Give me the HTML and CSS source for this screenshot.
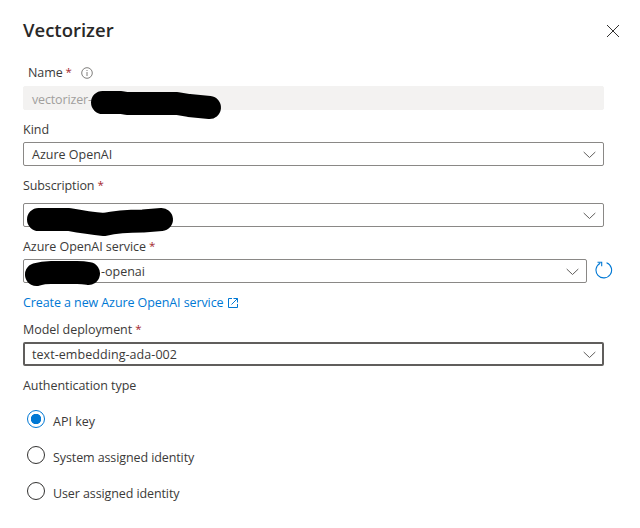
FILE: index.html
```html
<!DOCTYPE html>
<html lang="en">
<head>
<meta charset="utf-8">
<title>Vectorizer</title>
<link rel="stylesheet" href="styles.css">
</head>
<body>
<main class="panel">
  <header class="header">
    <h1 class="title">Vectorizer</h1>
    <svg class="close" width="14" height="14" viewBox="0 0 14 14"><path d="M1 1L13 13M13 1L1 13"/></svg>
  </header>

  <div class="label label-name"><span>Name</span><span class="req">*</span>
    <svg class="info" width="12" height="12" viewBox="0 0 12 12"><circle cx="6" cy="6" r="5.3"/><path d="M6 5v4M6 3v1"/></svg>
  </div>
  <div class="field disabled"><span class="t-vec">vectorizer-</span>
    <svg class="redact" width="560" height="48" viewBox="0 0 560 48"><path stroke-width="23" d="M79.500 15.500L98 15.500L104 16.500L154 16.500L166 18.500L186.500 20.500"/></svg>
  </div>

  <div class="label label-kind"><span>Kind</span></div>
  <div class="field select"><span>Azure OpenAI</span>
    <svg class="chevron" width="13" height="8" viewBox="0 0 13 8"><path d="M.7 1L6.5 6.5L12.3 1"/></svg>
  </div>

  <div class="label label-sub"><span class="t-sub">Subscription</span><span class="req">*</span></div>
  <div class="field select">
    <svg class="chevron" width="13" height="8" viewBox="0 0 13 8"><path d="M.7 1L6.5 6.5L12.3 1"/></svg>
    <svg class="redact" width="560" height="48" viewBox="0 0 560 48"><path stroke-width="23" d="M15.500 15.500L46 15.500Q65 19 81 20.500Q96 17 120 17L138.500 15.500"/></svg>
  </div>

  <div class="label label-service"><span class="t-service">Azure OpenAI service</span><span class="req">*</span></div>
  <div class="row">
    <div class="field select service"><span>-openai</span>
      <svg class="chevron" width="13" height="8" viewBox="0 0 13 8"><path d="M.7 1L6.5 6.5L12.3 1"/></svg>
      <svg class="redact" width="560" height="48" viewBox="0 0 560 48"><path stroke-width="23" d="M13.500 14.500Q20 12.500 28 12.500L54 12.500Q60 12.500 65.500 13.500"/></svg>
    </div>
    <svg class="refresh" width="18" height="18" viewBox="0 0 18 18"><path d="M11.500 1.800A7.800 7.800 0 1 1 5.200 2.200M2.500 1.300H6.700V5.300"/></svg>
  </div>

  <a class="link"><span class="t-link">Create a new Azure OpenAI service</span>
    <svg class="external" width="10" height="10" viewBox="0 0 10 10"><path d="M4 .5H.5V9.500H9.500V6M5.500 .5H9.500V4.500M9.500 .5L3.500 6.500"/></svg>
  </a>

  <div class="label label-model"><span class="t-model">Model deployment</span><span class="req">*</span></div>
  <div class="field select focused"><span class="t-text">text-embedding-ada-002</span>
    <svg class="chevron" width="13" height="8" viewBox="0 0 13 8"><path d="M.7 1L6.5 6.5L12.3 1"/></svg>
  </div>

  <div class="label label-auth"><span class="t-auth">Authentication type</span></div>
  <div class="radios">
    <div class="option"><i class="radio checked"></i><span>API key</span></div>
    <div class="option"><i class="radio"></i><span class="t-system">System assigned identity</span></div>
    <div class="option"><i class="radio"></i><span class="t-user">User assigned identity</span></div>
  </div>
</main>
</body>
</html>
```
FILE: styles.css
```css
* { box-sizing: border-box; }
body {
  margin: 0;
  background: #fff;
  color: #3b3a39;
  font-family: "Open Sans", "Noto Sans", sans-serif;
  font-size: 12.5px;
  line-height: 18px;
}
svg { fill: none; flex: none; }
span { white-space: nowrap; }
.panel { width: 640px; height: 528px; padding: 0 36px 0 23px; overflow: hidden; }
.header { display: flex; height: 64px; justify-content: space-between; margin-right: -16px; padding-top: 16px; }
.title { margin: 0; color: #292827; font-size: 18.5px; font-weight: 600; line-height: 27px; }
.close { margin-top: 8px; stroke: #323130; stroke-width: 1; }
.label { display: flex; height: 18px; }
.label-name { margin-bottom: 4px; padding-left: 5px; letter-spacing: -.1px; }
.label-kind { margin: 11px 0 3px; }
.label-sub { margin: 11px 0 8px; }
.label-service { margin: 11px 0 3px; }
.label-model { margin: 9px 0 3px; }
.label-auth { margin: 11px 0 0; }
.t-vec { letter-spacing: -.15px; }
.t-sub { letter-spacing: -.12px; }
.t-service { letter-spacing: -.05px; }
.t-link { letter-spacing: -.09px; }
.t-model { letter-spacing: -.04px; }
.t-text { letter-spacing: .06px; }
.t-auth { letter-spacing: -.06px; }
.t-system, .t-user { letter-spacing: -.1px; }
.req { margin: -1px 0 0 3px; color: #a4262c; font-size: 11.5px; }
.info { margin: 3px 0 0 9px; stroke: #605e5c; stroke-width: .8; }
.field { position: relative; display: flex; height: 24px; align-items: center; padding: 0 8px; border: 1px solid #8a8886; border-radius: 2px; }
.field span { padding-top: 2px; }
.field .t-vec { padding-top: 4px; }
.disabled { border-color: #f3f2f1; background: #f3f2f1; color: #a19f9d; }
.focused { border: 2px solid #605e5c; padding: 0 7px; }
.chevron { margin-left: auto; margin-right: -1px; margin-top: 1px; stroke: #605e5c; stroke-width: 1; }
.redact { position: absolute; left: -1px; top: 0; stroke: #000; stroke-linecap: round; stroke-linejoin: round; z-index: 1; }
.row { display: flex; margin-right: -9px; gap: 8px; }
.service { width: 564px; padding-left: 77px; }
.refresh { margin-top: 2px; stroke: #0078d4; stroke-width: 1.1; }
.link { display: flex; height: 18px; margin-top: 11px; color: #0078d4; }
.external { margin: 4px 0 0 4px; stroke: #0078d4; stroke-width: 1; }
.radios { display: grid; gap: 18px; padding: 15px 0 0 4px; }
.option { display: flex; height: 18px; gap: 8px; }
.option span { margin-top: 3px; }
.radio { width: 18px; height: 18px; border: 1px solid #323130; border-radius: 50%; flex: none; }
.checked { border-color: #0078d4; background: radial-gradient(circle, #0078d4 4.9px, transparent 5.5px); }
```
